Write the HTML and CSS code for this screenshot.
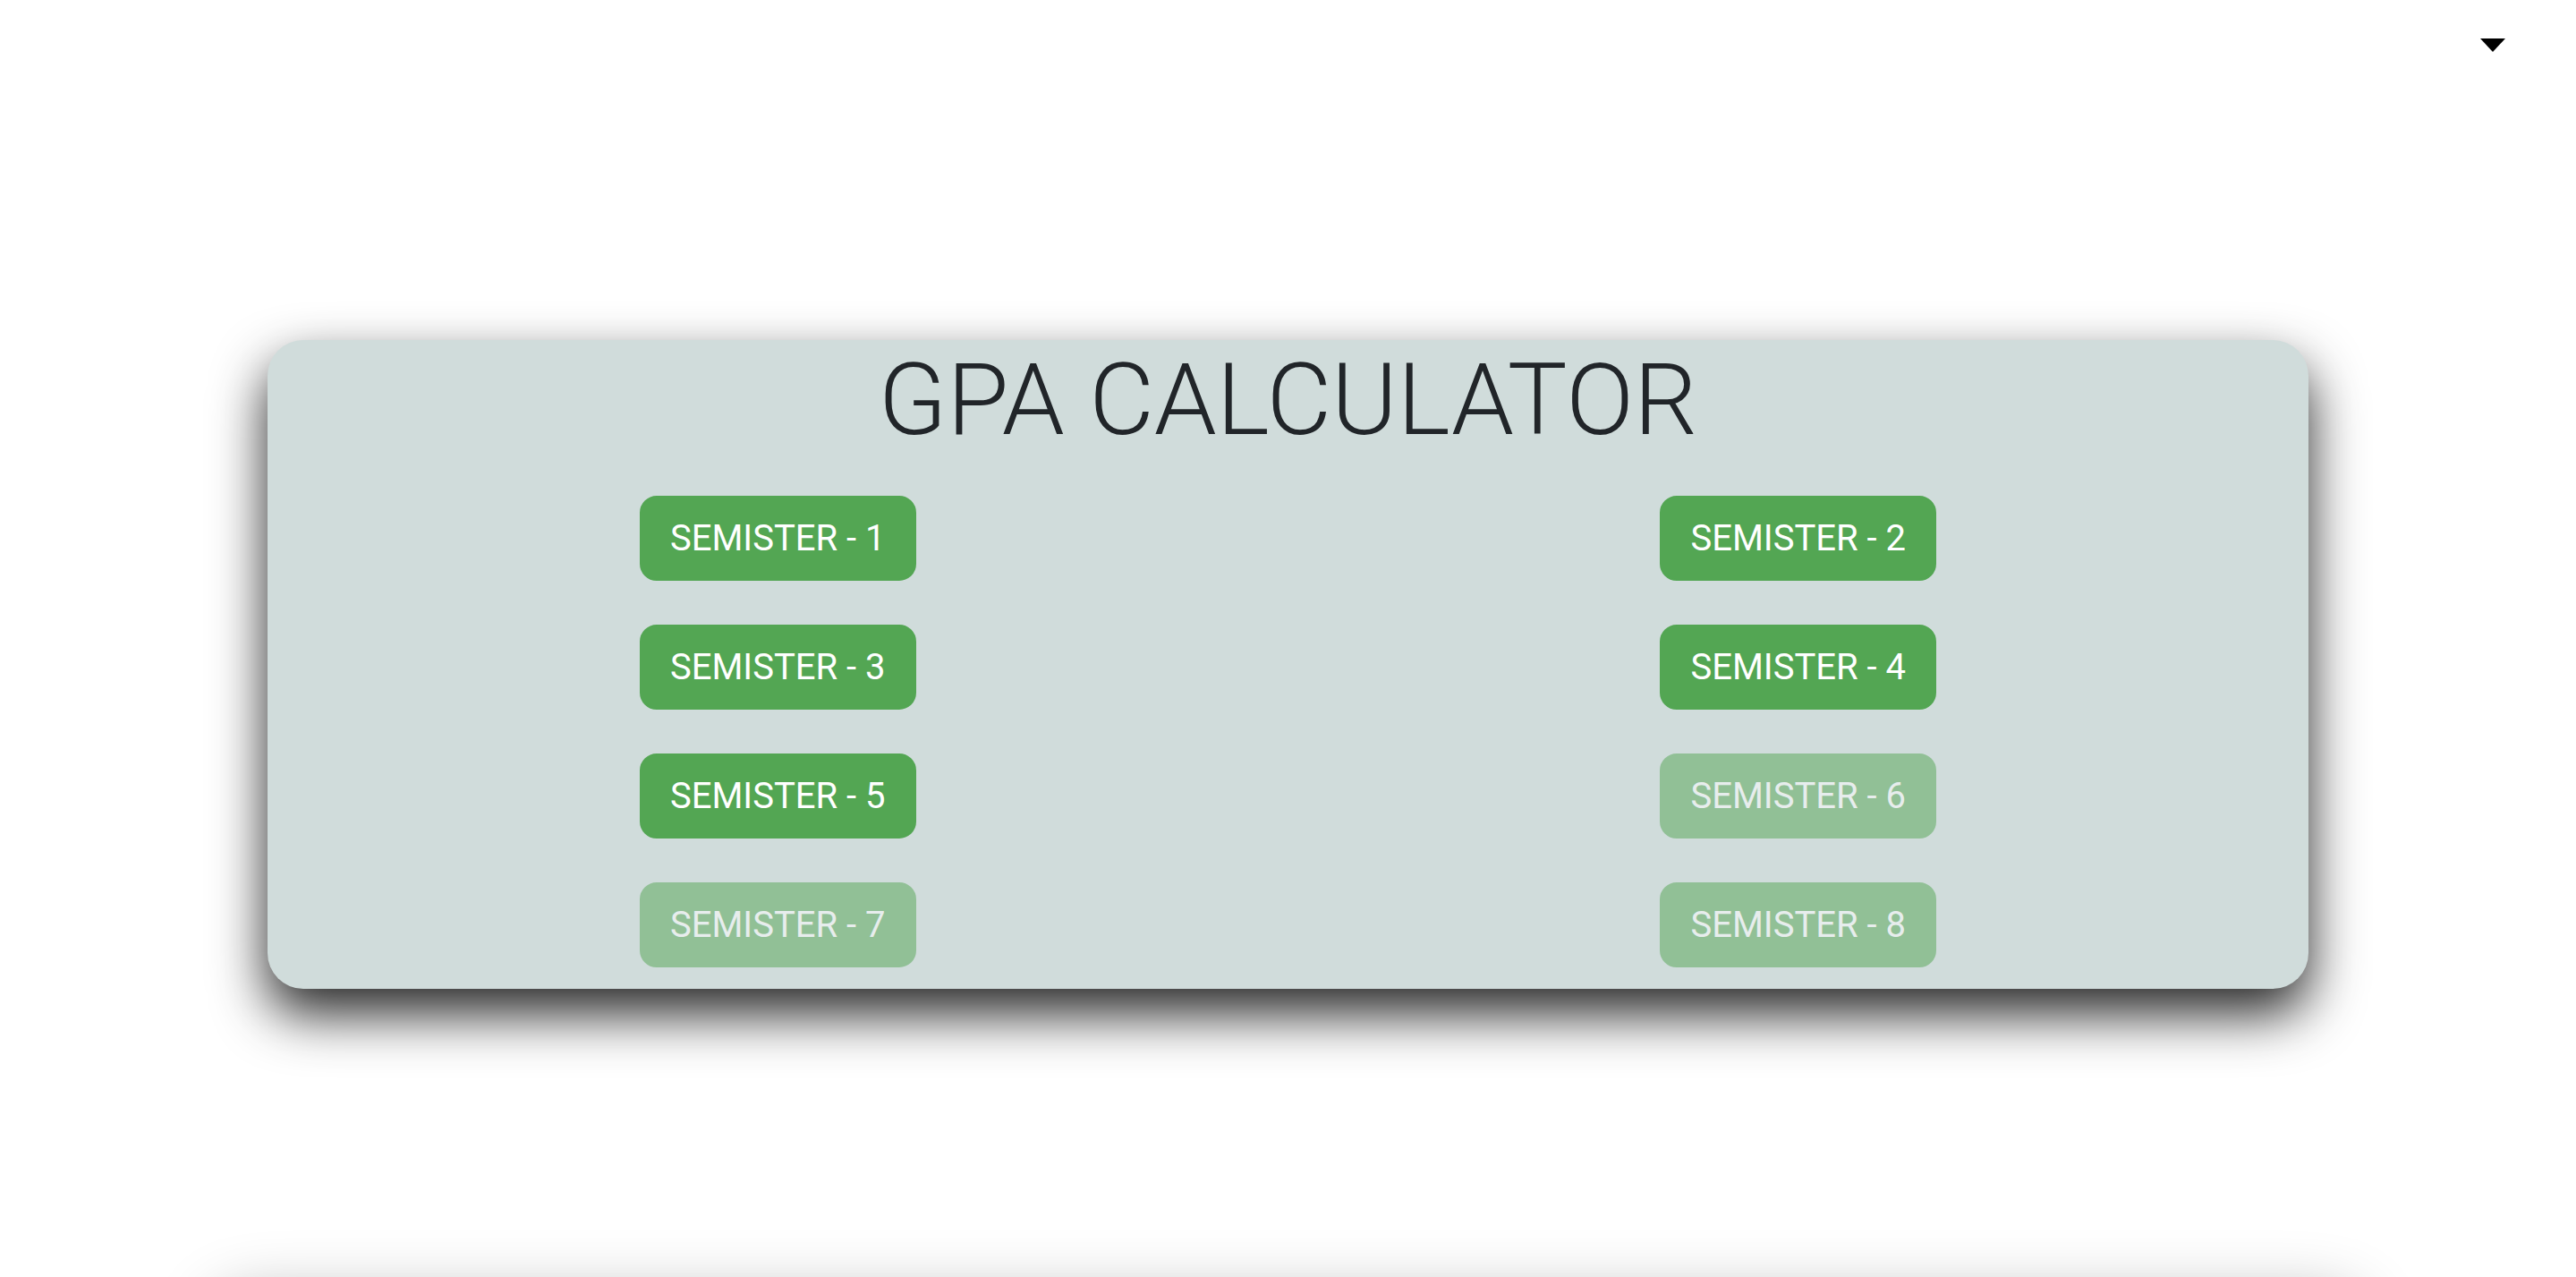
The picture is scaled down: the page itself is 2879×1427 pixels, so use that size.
FILE: index.html
```html
<!DOCTYPE html>
<html lang="en">
<head>
<meta charset="utf-8">
<title>GPA Calculator</title>
<link rel="stylesheet" href="styles.css">
</head>
<body>
<header class="topbar">
  <span class="caret" aria-label="menu"></span>
</header>
<main class="page">
  <section class="card">
    <h1 class="title">GPA CALCULATOR</h1>
    <div class="grid">
      <div class="cell"><button class="btn">SEMISTER - 1</button></div>
      <div class="cell"><button class="btn">SEMISTER - 2</button></div>
      <div class="cell"><button class="btn">SEMISTER - 3</button></div>
      <div class="cell"><button class="btn">SEMISTER - 4</button></div>
      <div class="cell"><button class="btn">SEMISTER - 5</button></div>
      <div class="cell"><button class="btn" disabled>SEMISTER - 6</button></div>
      <div class="cell"><button class="btn" disabled>SEMISTER - 7</button></div>
      <div class="cell"><button class="btn" disabled>SEMISTER - 8</button></div>
    </div>
  </section>
  <section class="card-next"></section>
</main>
</body>
</html>
```
FILE: styles.css
```css
html, body {
  margin: 0;
  padding: 0;
  background: #ffffff;
  font-family: Roboto, "Liberation Sans", sans-serif;
  color: #212529;
}

.topbar {
  display: flex;
  justify-content: flex-end;
  padding: 43px 79px 0 0;
  height: 15px;
}

.caret {
  display: block;
  width: 0;
  height: 0;
  border-left: 14px solid transparent;
  border-right: 14px solid transparent;
  border-top: 15px solid #000;
}

.page {
  padding: 322px 299px 0;
}

.card {
  background: #d0dcdb;
  border-radius: 40px;
  box-shadow: 0 28px 60px rgba(0, 0, 0, 0.85);
  padding: 0 0 24px;
}

.title {
  margin: 0 0 40px;
  text-align: center;
  font-family: Roboto, "Liberation Sans", sans-serif;
  font-weight: 300;
  font-size: 112px;
  line-height: 1.2;
  color: #212529;
}

.grid {
  display: grid;
  grid-template-columns: 1fr 1fr;
  row-gap: 49px;
}

.cell {
  display: flex;
  justify-content: center;
}

.btn {
  font-family: Roboto, "Liberation Sans", sans-serif;
  font-size: 40px;
  font-weight: 400;
  line-height: 59px;
  padding: 16px 32px;
  border: 2px solid #53a653;
  border-radius: 19px;
  background: #53a653;
  color: #ffffff;
  cursor: pointer;
}

.btn:disabled {
  opacity: 0.5;
  cursor: default;
}

.card-next {
  margin: 344px -60px 0;
  height: 400px;
  border-radius: 40px;
  background: #ffffff;
  box-shadow: 0 0 70px rgba(0, 0, 0, 0.3);
}
```
